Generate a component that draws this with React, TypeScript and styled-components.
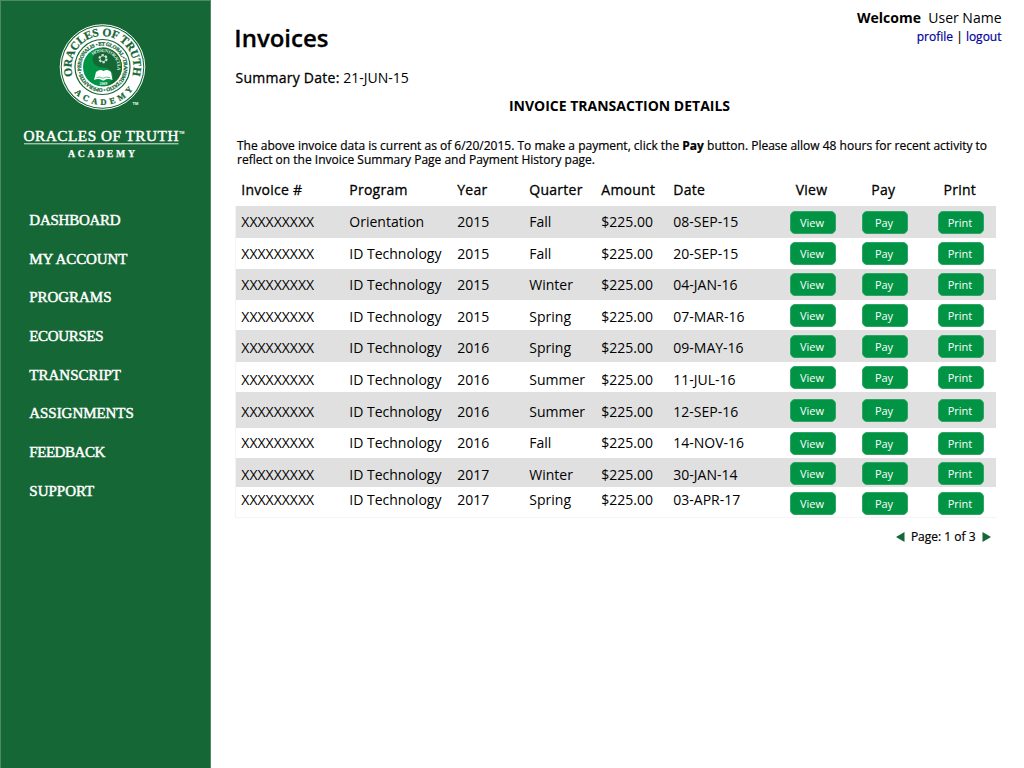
import React from "react";
import styled, { createGlobalStyle, css } from "styled-components";

const GlobalStyle = createGlobalStyle`
  * { box-sizing: border-box; }
  body { margin: 0; background: #fff; color: #000; font-family: "Open Sans", sans-serif; font-size: 14px; }
`;

const medium = css`
  -webkit-text-stroke: 0.3px currentColor;
`;

const Page = styled.div`
  display: flex;
  width: 1024px;
  height: 768px;
  overflow: hidden;
`;

const Sidebar = styled.aside`
  width: 211px;
  flex: none;
  background: #166736;
  border: 1px solid #4b8a64;
  border-bottom: 0;
`;

const Brand = styled.div`
  height: 160px;
  svg { display: block; }
`;

const Nav = styled.nav`
  display: flex;
  flex-direction: column;
  padding: 40px 0 0 28.3px;
`;

const NavLink = styled.a<{ $tracking: number }>`
  height: 38.7px;
  line-height: 38.7px;
  font-family: "Liberation Serif", serif;
  font-size: 15px;
  color: #fff;
  white-space: nowrap;
  -webkit-text-stroke: 0.45px #fff;
  letter-spacing: ${(p) => p.$tracking}px;
`;

const Main = styled.main`
  width: 761px;
  margin-left: 24px;
`;

const Header = styled.header`
  display: flex;
  justify-content: space-between;
  height: 67px;
  margin: 0 -5.5px 0 -0.7px;
`;

const Title = styled.h1`
  margin: 22px 0 0;
  font-size: 24px;
  line-height: 32px;
  font-weight: 600;
  ${medium}
`;

const Account = styled.div`
  padding-top: 8px;
  text-align: right;
  line-height: 20px;
`;

const Links = styled.div`
  font-size: 12px;
  line-height: 18px;
  -webkit-text-stroke: 0.2px currentColor;
  a { color: #00009c; }
`;

const Summary = styled.div`
  padding-left: 0.5px;
  line-height: 22px;
  span { ${medium} letter-spacing: 0.25px; }
`;

const SectionTitle = styled.h2`
  margin: 7px 0 0 8px;
  text-align: center;
  font-size: 14px;
  line-height: 20px;
  font-weight: 700;
`;

const Notice = styled.p`
  margin: 23px 0 0 2px;
  height: 28px;
  font-size: 12px;
  line-height: 14px;
  white-space: nowrap;
  -webkit-text-stroke: 0.2px currentColor;
`;

const Columns = styled.div`
  display: grid;
  grid-template-columns: 108px 108px 72px 72px 72px 117px 72px 76px 46px;
  padding-left: 6px;
`;

const HeadRow = styled(Columns)`
  height: 39px;
  padding-top: 13px;
  line-height: 20px;
  letter-spacing: 0.25px;
  ${medium}
`;

const HeadCell = styled.div<{ $indent?: number }>`
  padding-left: ${(p) => p.$indent ?? 0.3}px;
  white-space: nowrap;
`;

const Rows = styled.div`
  border-bottom: 1px solid #f4f4f4;
`;

const Row = styled(Columns)<{ $height: number; $shaded: boolean }>`
  height: ${(p) => p.$height}px;
  background: ${(p) => (p.$shaded ? "#e0e0e0" : "#fff")};
  box-shadow: inset 1px 0 #f4f4f4;
`;

const Cell = styled.div<{ $top: number }>`
  padding: ${(p) => p.$top}px 0 0 0.3px;
  line-height: 20px;
  white-space: nowrap;
`;

const Button = styled.button<{ $top: number }>`
  width: 46px;
  height: 23px;
  margin: ${(p) => p.$top}px 0 0;
  padding: 0 2px 0 0;
  border: 1px solid #2fa566;
  border-radius: 5px;
  background: #009444;
  color: #fff;
  font: 11px/20px "Open Sans", sans-serif;
`;

const Pager = styled.div`
  display: flex;
  justify-content: flex-end;
  align-items: center;
  gap: 6px;
  margin: 10px 5.5px 0 0;
  font-size: 12px;
  line-height: 18px;
  -webkit-text-stroke: 0.2px currentColor;
  svg { display: block; }
`;

const navItems: [string, number][] = [
  ["DASHBOARD", -0.25],
  ["MY ACCOUNT", -0.1],
  ["PROGRAMS", -0.05],
  ["ECOURSES", -0.35],
  ["TRANSCRIPT", 0],
  ["ASSIGNMENTS", -0.05],
  ["FEEDBACK", -0.45],
  ["SUPPORT", 0],
];

interface Invoice {
  program: string;
  year: string;
  quarter: string;
  date: string;
  height: number;
  textTop: number;
  buttonTop: number;
}

const invoice = (
  program: string, year: string, quarter: string, date: string,
  height: number, textTop: number, buttonTop: number,
): Invoice => ({ program, year, quarter, date, height, textTop, buttonTop });

const invoices: Invoice[] = [
  invoice("Orientation", "2015", "Fall", "08-SEP-15", 32, 6, 5),
  invoice("ID Technology", "2015", "Fall", "20-SEP-15", 31, 6, 4),
  invoice("ID Technology", "2015", "Winter", "04-JAN-16", 31, 6, 4),
  invoice("ID Technology", "2015", "Spring", "07-MAR-16", 30, 7, 4),
  invoice("ID Technology", "2016", "Spring", "09-MAY-16", 32, 8, 5),
  invoice("ID Technology", "2016", "Summer", "11-JUL-16", 30, 8, 4),
  invoice("ID Technology", "2016", "Summer", "12-SEP-16", 36, 10, 7),
  invoice("ID Technology", "2016", "Fall", "14-NOV-16", 30, 5, 4),
  invoice("ID Technology", "2017", "Winter", "30-JAN-14", 29, 7, 4),
  invoice("ID Technology", "2017", "Spring", "03-APR-17", 30, 3, 5),
];

const Logo = () => (
  <svg width="209" height="160" viewBox="1 1 209 160" fontFamily="Liberation Serif, serif">
    <defs>
      <path id="top-arc" d="M71.500 67a31 31 0 0 1 62 0a31 31 0 0 1-62 0" transform="rotate(-17 102.5 67)" />
      <path id="bottom-arc" d="M64.500 67a38 38 0 0 0 76 0" />
      <path id="motto-arc" d="M81 67a21.500 21.500 0 1 1 43 0a21.500 21.500 0 0 1-43 0" transform="rotate(73 102.5 67)" />
      <path id="inner-arc" d="M87.500 67a15 15 0 0 1 30 0a15 15 0 0 1-2 7" />
    </defs>
    <circle cx="102.5" cy="67" r="42.3" fill="#166736" stroke="#fff" strokeWidth="1" />
    <circle cx="102.5" cy="67" r="40.8" fill="#fff" />
    <circle cx="102.5" cy="67" r="27.5" fill="#fff" stroke="#166736" strokeWidth="1.2" />
    <circle cx="102.5" cy="67" r="19.5" fill="#009444" />
    <path d="M102.500 47.500a19.500 19.500 0 0 1 0 39a19 19 0 0 0 6-2c9-8 3-17-6-17c-12 0-14-15 0-20" fill="#166736" />
    <g fill="#166736" stroke="#166736" strokeWidth="0.25">
      <text fontSize="11.5" fontWeight="700">
        <textPath href="#top-arc" textLength="115" lengthAdjust="spacing">ORACLES OF TRUTH</textPath>
      </text>
      <text fontSize="8.5" fontWeight="700">
        <textPath href="#bottom-arc" startOffset="28" textLength="67" lengthAdjust="spacing">ACADEMY</textPath>
      </text>
      <text fontSize="5.2" fontWeight="700">
        <textPath href="#motto-arc" textLength="133" lengthAdjust="spacing">• ET GLOBAL • TRANSMUTATIO • OPERANTIS • PERSONALIS</textPath>
      </text>
    </g>
    <text fontSize="4.8" fontWeight="700" fill="#d5eadc">
      <textPath href="#inner-arc" startOffset="13" textLength="37" lengthAdjust="spacing">HOS SUNT ORACULA</textPath>
    </text>
    <circle cx="103" cy="58.700" r="3.700" fill="none" stroke="#d5eadc" strokeWidth="1.800" strokeDasharray="2.300 1.570" />
    <circle cx="103" cy="58.700" r="2.900" fill="none" stroke="#d5eadc" strokeWidth=".8" />
    <path d="M96 72q4-3.500 7.500-1q4-2.500 7.500 1l1.500 8q-5-2-8.500.5h-1.500q-4-2.500-8.500-.5z" fill="#fff" />
    <path d="M96.500 77.500q3.500-1.200 6.500.8q3-2 7-.8" fill="none" stroke="#009444" strokeWidth=".6" />
    <text x="99.500" y="84.700" fontSize="3.800" fontWeight="700" fill="#fff">2009</text>
    <g fill="#fff">
      <text x="132.500" y="105" fontFamily="Liberation Sans" fontSize="4" fontWeight="700">TM</text>
      <text x="23.500" y="141" fontSize="15.300" stroke="#fff" strokeWidth=".45" textLength="155" lengthAdjust="spacing">ORACLES OF TRUTH</text>
      <text x="179" y="133.500" fontFamily="Liberation Sans" fontSize="3.800" fontWeight="700">TM</text>
      <rect x="24" y="143.300" width="154.500" height="1" opacity=".85" />
      <text x="68" y="156.500" fontSize="9.800" fontWeight="700" stroke="#fff" strokeWidth=".25" textLength="67" lengthAdjust="spacing">ACADEMY</text>
    </g>
  </svg>
);

const Arrow = ({ d }: { d: string }) => (
  <svg width="9" height="10" viewBox="0 0 9 10"><path d={d} fill="#166736" /></svg>
);

export default function App() {
  return (
    <Page>
      <GlobalStyle />
      <Sidebar>
        <Brand><Logo /></Brand>
        <Nav>
          {navItems.map(([label, tracking]) => (
            <NavLink key={label} $tracking={tracking}>{label}</NavLink>
          ))}
        </Nav>
      </Sidebar>
      <Main>
        <Header>
          <Title>Invoices</Title>
          <Account>
            <div><b>Welcome</b>&nbsp; User Name</div>
            <Links><a>profile</a> | <a>logout</a></Links>
          </Account>
        </Header>
        <Summary><span>Summary Date:</span> 21-JUN-15</Summary>
        <SectionTitle>INVOICE TRANSACTION DETAILS</SectionTitle>
        <Notice>
          The above invoice data is current as of 6/20/2015. To make a payment, click the <b>Pay</b> button. Please allow 48 hours for recent activity to
          <br />
          reflect on the Invoice Summary Page and Payment History page.
        </Notice>
        <HeadRow>
          <HeadCell>Invoice #</HeadCell>
          <HeadCell>Program</HeadCell>
          <HeadCell>Year</HeadCell>
          <HeadCell>Quarter</HeadCell>
          <HeadCell>Amount</HeadCell>
          <HeadCell>Date</HeadCell>
          <HeadCell $indent={5.7}>View</HeadCell>
          <HeadCell $indent={9.3}>Pay</HeadCell>
          <HeadCell $indent={5.5}>Print</HeadCell>
        </HeadRow>
        <Rows>
          {invoices.map((r, i) => (
            <Row key={r.date} $height={r.height} $shaded={i % 2 === 0}>
              <Cell $top={r.textTop}>XXXXXXXXX</Cell>
              <Cell $top={r.textTop}>{r.program}</Cell>
              <Cell $top={r.textTop}>{r.year}</Cell>
              <Cell $top={r.textTop}>{r.quarter}</Cell>
              <Cell $top={r.textTop}>$225.00</Cell>
              <Cell $top={r.textTop}>{r.date}</Cell>
              <Button $top={r.buttonTop}>View</Button>
              <Button $top={r.buttonTop}>Pay</Button>
              <Button $top={r.buttonTop}>Print</Button>
            </Row>
          ))}
        </Rows>
        <Pager>
          <Arrow d="M0 5L8.500 0V10Z" />
          <span>Page: 1 of 3</span>
          <Arrow d="M9 5L.5 0V10Z" />
        </Pager>
      </Main>
    </Page>
  );
}
